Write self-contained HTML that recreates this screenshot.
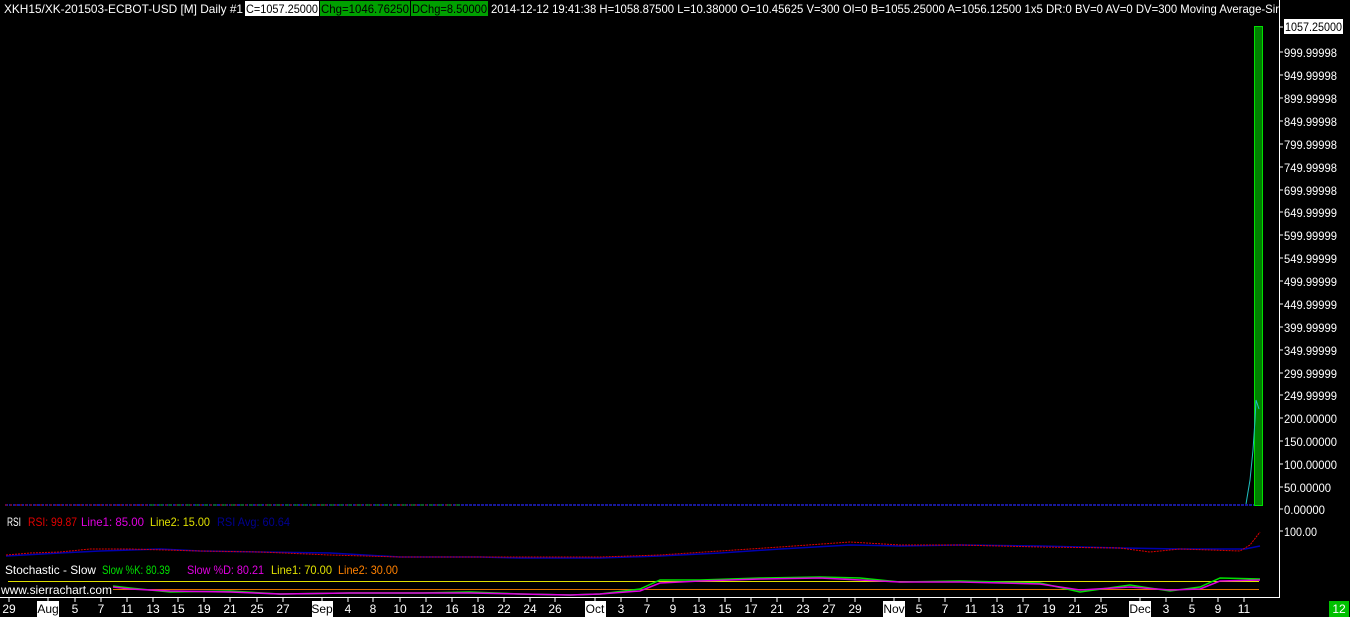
<!DOCTYPE html>
<html><head><meta charset="utf-8"><style>
html,body{margin:0;padding:0;background:#000;}
svg{display:block}
text{font-family:"Liberation Sans",sans-serif;font-size:12px;}
</style></head><body>
<svg width="1350" height="617" viewBox="0 0 1350 617" xmlns="http://www.w3.org/2000/svg">
<rect width="1350" height="617" fill="#000"/>
<text x="4" y="13" fill="#fff" textLength="239" lengthAdjust="spacingAndGlyphs">XKH15/XK-201503-ECBOT-USD [M]  Daily  #1</text>
<rect x="245" y="1" width="74" height="15" fill="#fff"/>
<text x="246" y="13" fill="#000" textLength="72" lengthAdjust="spacingAndGlyphs">C=1057.25000</text>
<rect x="320" y="1" width="90" height="15" fill="#00a000"/>
<text x="321" y="13" fill="#000" textLength="88" lengthAdjust="spacingAndGlyphs">Chg=1046.76250</text>
<rect x="411" y="1" width="77" height="15" fill="#00a000"/>
<text x="412" y="13" fill="#000" textLength="75" lengthAdjust="spacingAndGlyphs">DChg=8.50000</text>
<text x="491" y="13" fill="#fff" textLength="788" lengthAdjust="spacingAndGlyphs">2014-12-12 19:41:38 H=1058.87500 L=10.38000 O=10.45625 V=300 OI=0 B=1055.25000 A=1056.12500 1x5 DR:0 BV=0 AV=0 DV=300  Moving Average-Sir</text>
<rect x="1279" y="0" width="71" height="18" fill="#000"/>
<line x1="1279.5" y1="0" x2="1279.5" y2="598" stroke="#fff"/>
<line x1="0" y1="597.5" x2="1280" y2="597.5" stroke="#fff"/>
<rect x="1284" y="19" width="59" height="15" fill="#fff"/>
<text x="1285" y="31" fill="#000" textLength="57" lengthAdjust="spacingAndGlyphs">1057.25000</text>
<g fill="#fff">
<text x="1284" y="57" textLength="53" lengthAdjust="spacingAndGlyphs">999.99998</text>
<text x="1284" y="80" textLength="53" lengthAdjust="spacingAndGlyphs">949.99998</text>
<text x="1284" y="103" textLength="53" lengthAdjust="spacingAndGlyphs">899.99998</text>
<text x="1284" y="126" textLength="53" lengthAdjust="spacingAndGlyphs">849.99998</text>
<text x="1284" y="149" textLength="53" lengthAdjust="spacingAndGlyphs">799.99998</text>
<text x="1284" y="172" textLength="53" lengthAdjust="spacingAndGlyphs">749.99998</text>
<text x="1284" y="195" textLength="53" lengthAdjust="spacingAndGlyphs">699.99998</text>
<text x="1284" y="217" textLength="53" lengthAdjust="spacingAndGlyphs">649.99999</text>
<text x="1284" y="240" textLength="53" lengthAdjust="spacingAndGlyphs">599.99999</text>
<text x="1284" y="263" textLength="53" lengthAdjust="spacingAndGlyphs">549.99999</text>
<text x="1284" y="286" textLength="53" lengthAdjust="spacingAndGlyphs">499.99999</text>
<text x="1284" y="309" textLength="53" lengthAdjust="spacingAndGlyphs">449.99999</text>
<text x="1284" y="332" textLength="53" lengthAdjust="spacingAndGlyphs">399.99999</text>
<text x="1284" y="355" textLength="53" lengthAdjust="spacingAndGlyphs">349.99999</text>
<text x="1284" y="378" textLength="53" lengthAdjust="spacingAndGlyphs">299.99999</text>
<text x="1284" y="400" textLength="53" lengthAdjust="spacingAndGlyphs">249.99999</text>
<text x="1284" y="423" textLength="53" lengthAdjust="spacingAndGlyphs">200.00000</text>
<text x="1284" y="446" textLength="53" lengthAdjust="spacingAndGlyphs">150.00000</text>
<text x="1284" y="469" textLength="53" lengthAdjust="spacingAndGlyphs">100.00000</text>
<text x="1284" y="492" textLength="47" lengthAdjust="spacingAndGlyphs">50.00000</text>
<text x="1284" y="514" textLength="41" lengthAdjust="spacingAndGlyphs">0.00000</text>
<text x="1284" y="536" textLength="33" lengthAdjust="spacingAndGlyphs">100.00</text>
</g>
<g stroke="#fff">
<path d="M1280 27h3M1280 52h3M1280 75h3M1280 98h3M1280 121h3M1280 144h3M1280 167h3M1280 190h3M1280 212h3M1280 235h3M1280 258h3M1280 281h3M1280 304h3M1280 327h3M1280 350h3M1280 373h3M1280 395h3M1280 418h3M1280 441h3M1280 464h3M1280 487h3M1280 509h3M1280 531h3"/>
</g>
<line x1="5" y1="505" x2="1255" y2="505" stroke="#2020d0" stroke-width="1.5" stroke-dasharray="3 1"/>
<line x1="5" y1="505" x2="460" y2="505" stroke="#c00000" stroke-dasharray="2 3"/>
<line x1="150" y1="505" x2="460" y2="505" stroke="#00a000" stroke-dasharray="4 5"/>
<rect x="1254.5" y="26.5" width="8" height="479" fill="#008000" stroke="#00e000"/>
<polyline points="1246,504 1250,480 1253,450 1255,420 1256,400 1259,409" fill="none" stroke="#20c0c0"/>
<text x="7" y="526" fill="#fff" textLength="14" lengthAdjust="spacingAndGlyphs">RSI</text>
<text x="28" y="526" fill="#e00000" textLength="49" lengthAdjust="spacingAndGlyphs">RSI: 99.87</text>
<text x="81" y="526" fill="#e000e0" textLength="63" lengthAdjust="spacingAndGlyphs">Line1: 85.00</text>
<text x="150" y="526" fill="#e0e000" textLength="60" lengthAdjust="spacingAndGlyphs">Line2: 15.00</text>
<text x="217" y="526" fill="#000090" textLength="73" lengthAdjust="spacingAndGlyphs">RSI Avg: 60.64</text>
<polyline points="6,556 60,553 100,551 160,549 200,551 260,552 330,553 400,557 480,557 520,558 600,558 660,556 720,553 780,549 850,545 900,546 960,545 1040,546 1120,548 1180,549 1245,549 1260,546" fill="none" stroke="#0000b0" stroke-width="1.5"/>
<polyline points="6,555 30,553 60,552 90,549 130,549 200,551 260,552 330,555 400,557 480,557 540,557 600,557 660,555 720,551 780,547 850,542 900,545 960,545 1040,547 1120,548 1150,552 1180,549 1240,551 1250,545 1260,532" fill="none" stroke="#e00000" stroke-dasharray="2 1"/>
<text x="5" y="574" fill="#fff" textLength="91" lengthAdjust="spacingAndGlyphs">Stochastic - Slow</text>
<text x="102" y="574" fill="#00e000" textLength="68" lengthAdjust="spacingAndGlyphs">Slow %K: 80.39</text>
<text x="187" y="574" fill="#e000e0" textLength="77" lengthAdjust="spacingAndGlyphs">Slow %D: 80.21</text>
<text x="271" y="574" fill="#e0e000" textLength="61" lengthAdjust="spacingAndGlyphs">Line1: 70.00</text>
<text x="338" y="574" fill="#ff8000" textLength="60" lengthAdjust="spacingAndGlyphs">Line2: 30.00</text>
<line x1="8" y1="581.5" x2="1259" y2="581.5" stroke="#e0e000"/>
<line x1="8" y1="589.5" x2="1259" y2="589.5" stroke="#e07000"/>
<rect x="0" y="583" width="113" height="13" fill="#000"/>
<text x="1" y="594" fill="#fff" textLength="111" lengthAdjust="spacingAndGlyphs">www.sierrachart.com</text>
<polyline points="113,586 130,588 170,592 230,591 280,594 350,593 420,593 470,592 520,594 570,595 600,594 640,589 660,580 700,580 760,578 820,577 860,578 900,582 960,581 1040,583 1080,592 1130,585 1170,591 1200,587 1220,578 1260,579" fill="none" stroke="#00e000" stroke-width="1.5"/>
<polyline points="113,587 130,589 170,591 230,592 280,594 350,593 420,593 470,593 520,594 570,595 600,594 640,591 660,583 700,581 760,579 820,578 860,580 900,582 960,582 1040,584 1080,590 1130,587 1170,590 1200,589 1220,581 1260,580" fill="none" stroke="#e000e0" stroke-width="1.5"/>
<g stroke="#fff"><path d="M9 598v4M48 598v4M75 598v4M101 598v4M127 598v4M153 598v4M178 598v4M204 598v4M230 598v4M257 598v4M283 598v4M322 598v4M348 598v4M373 598v4M400 598v4M426 598v4M452 598v4M478 598v4M504 598v4M530 598v4M555 598v4M595 598v4M621 598v4M647 598v4M673 598v4M699 598v4M725 598v4M751 598v4M777 598v4M803 598v4M829 598v4M855 598v4M894 598v4M919 598v4M945 598v4M971 598v4M997 598v4M1023 598v4M1049 598v4M1075 598v4M1101 598v4M1140 598v4M1166 598v4M1192 598v4M1218 598v4M1244 598v4"/></g>
<g fill="#fff" text-anchor="middle">
<text x="9" y="613">29</text>
<rect x="37" y="601" width="22" height="16" fill="#fff"/><text x="48" y="613" fill="#000">Aug</text>
<text x="75" y="613">5</text><text x="101" y="613">7</text><text x="127" y="613">11</text><text x="153" y="613">13</text><text x="178" y="613">15</text><text x="204" y="613">19</text><text x="230" y="613">21</text><text x="257" y="613">25</text><text x="283" y="613">27</text>
<rect x="312" y="601" width="21" height="16" fill="#fff"/><text x="322" y="613" fill="#000">Sep</text>
<text x="348" y="613">4</text><text x="373" y="613">8</text><text x="400" y="613">10</text><text x="426" y="613">12</text><text x="452" y="613">16</text><text x="478" y="613">18</text><text x="504" y="613">22</text><text x="530" y="613">24</text><text x="555" y="613">26</text>
<rect x="585" y="601" width="21" height="16" fill="#fff"/><text x="595" y="613" fill="#000">Oct</text>
<text x="621" y="613">3</text><text x="647" y="613">7</text><text x="673" y="613">9</text><text x="699" y="613">13</text><text x="725" y="613">15</text><text x="751" y="613">17</text><text x="777" y="613">21</text><text x="803" y="613">23</text><text x="829" y="613">27</text><text x="855" y="613">29</text>
<rect x="883" y="601" width="22" height="16" fill="#fff"/><text x="894" y="613" fill="#000">Nov</text>
<text x="919" y="613">5</text><text x="945" y="613">7</text><text x="971" y="613">11</text><text x="997" y="613">13</text><text x="1023" y="613">17</text><text x="1049" y="613">19</text><text x="1075" y="613">21</text><text x="1101" y="613">25</text>
<rect x="1129" y="601" width="22" height="16" fill="#fff"/><text x="1140" y="613" fill="#000">Dec</text>
<text x="1166" y="613">3</text><text x="1192" y="613">5</text><text x="1218" y="613">9</text><text x="1244" y="613">11</text>
</g>
<rect x="1329" y="601" width="20" height="16" fill="#00c000"/>
<text x="1339" y="613" fill="#fff" text-anchor="middle">12</text>
</svg>
</body></html>
